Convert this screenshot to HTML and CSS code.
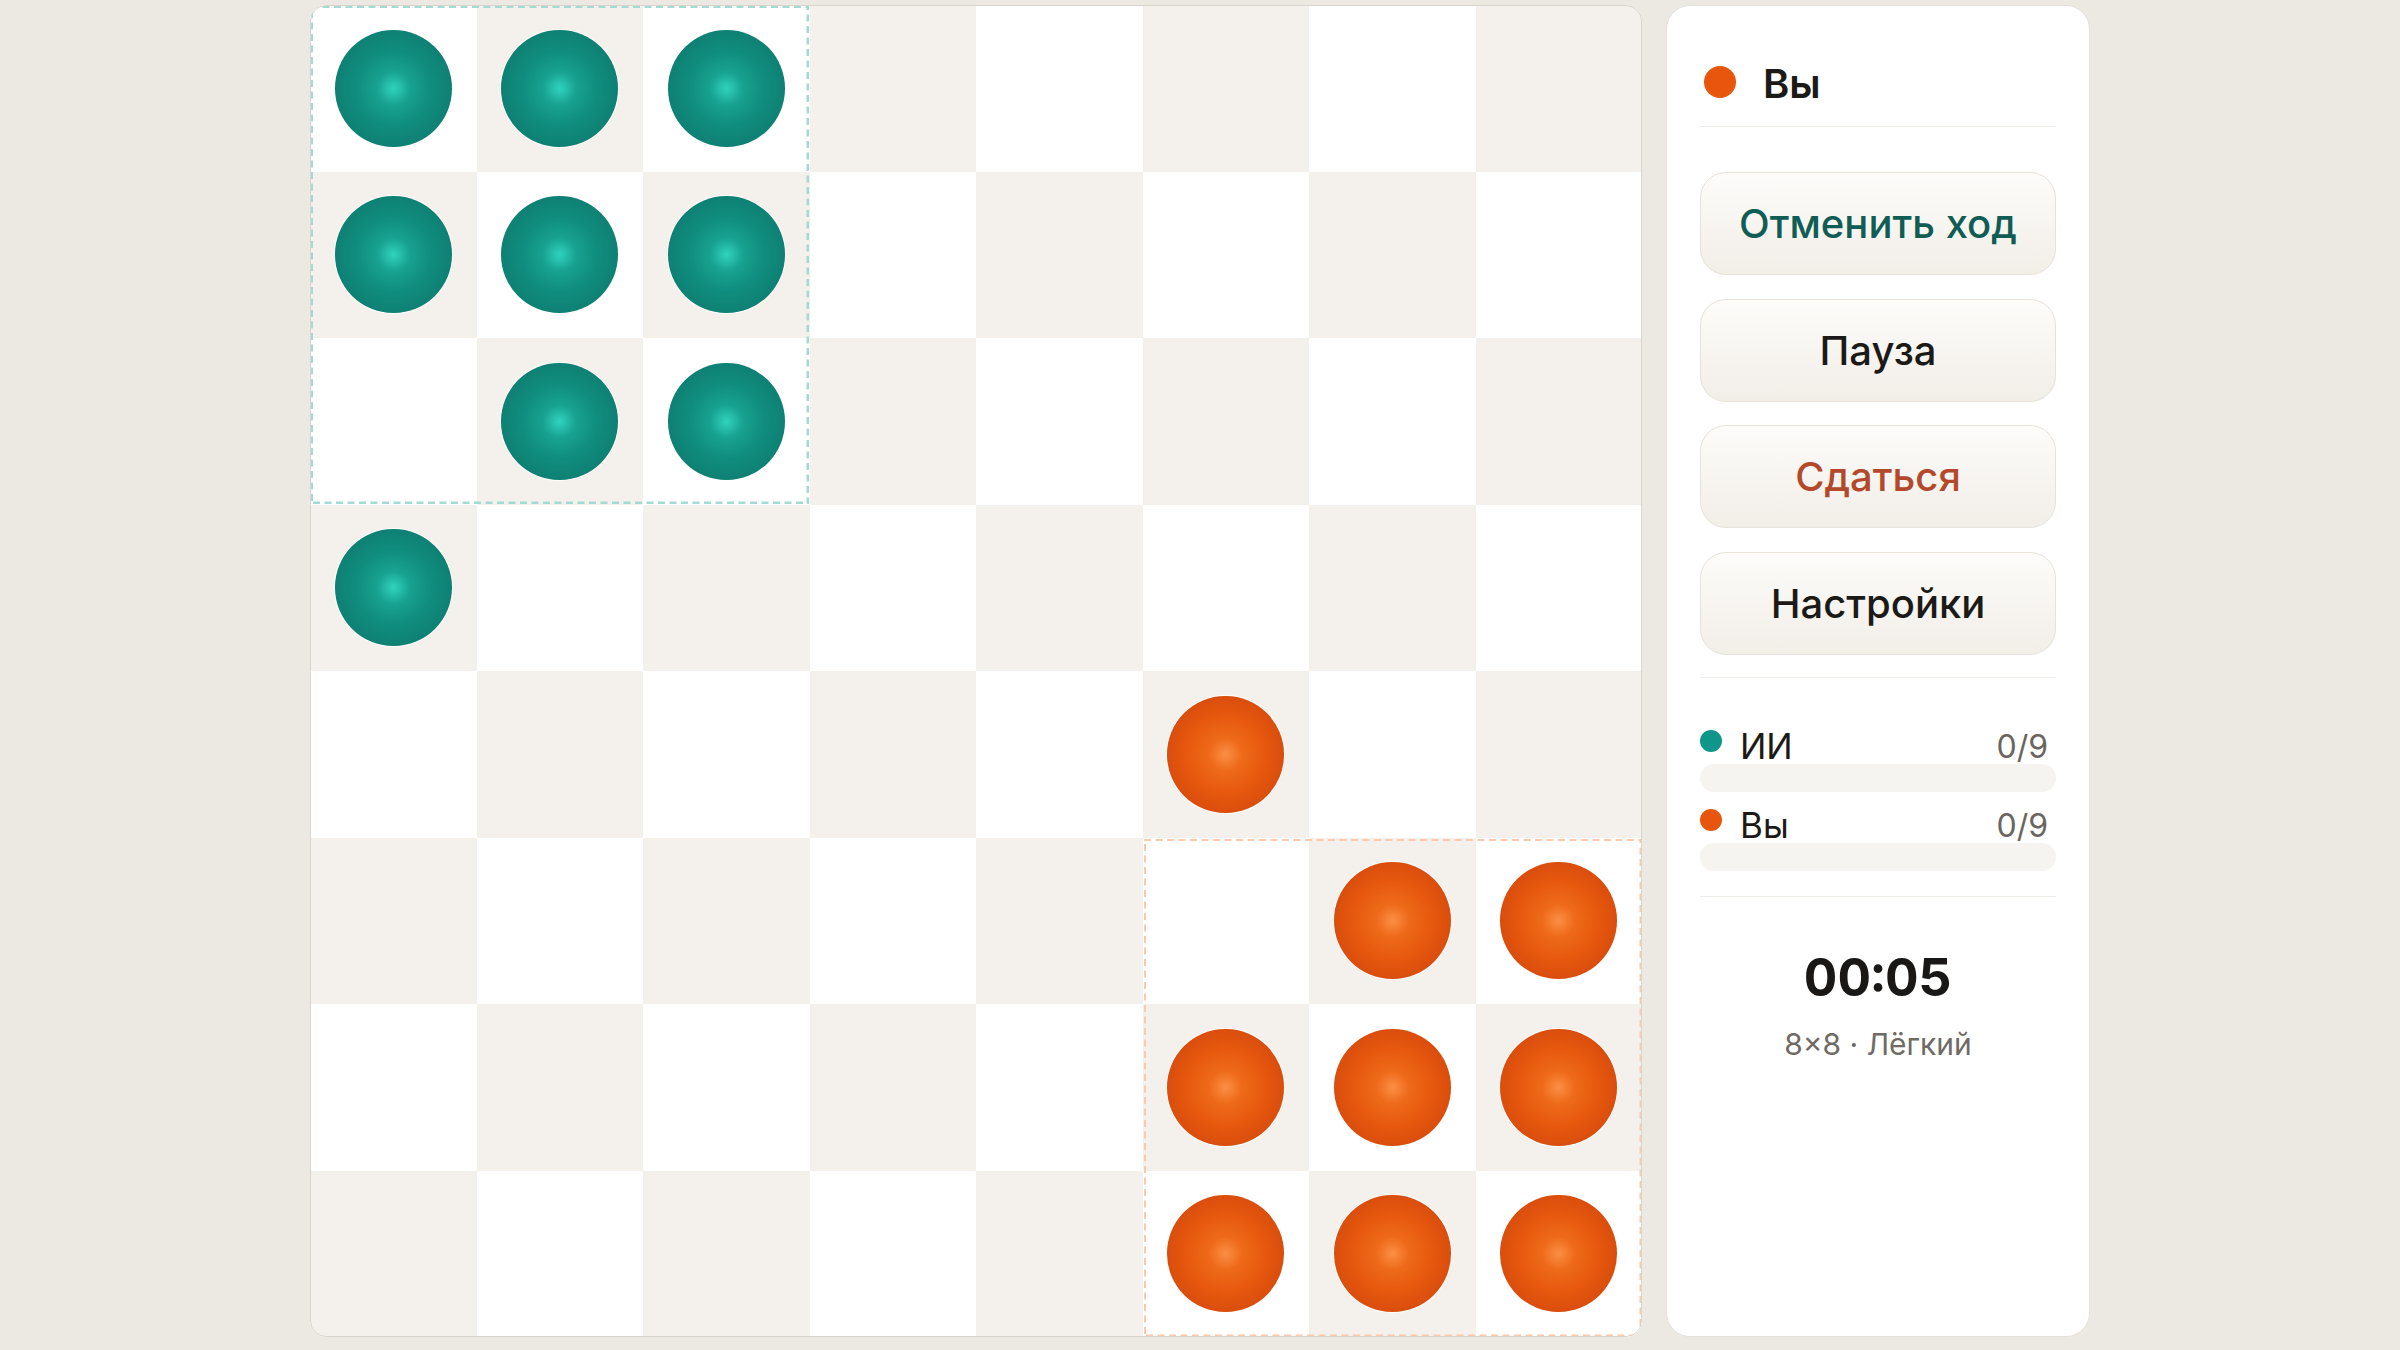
FILE: index.html
```html
<!DOCTYPE html>
<html lang="ru">

<head>
    <meta charset="UTF-8">
    <meta name="viewport" content="width=device-width, initial-scale=1.0">
    <title>Уголки</title>
    <link rel="stylesheet" href="styles.css">
</head>

<body>
    <div class="game">
        <div class="board" id="board">
            <div class="zone zone-ai">
                <svg class="zone-line"><rect width="100%" height="100%"></rect></svg>
            </div>
            <div class="zone zone-you">
                <svg class="zone-line"><rect width="100%" height="100%"></rect></svg>
            </div>
        </div>

        <aside class="panel">
            <div class="turn">
                <span class="dot dot-you"></span>
                <span class="turn-name">Вы</span>
            </div>

            <div class="controls">
                <button class="btn btn-undo">Отменить ход</button>
                <button class="btn">Пауза</button>
                <button class="btn btn-resign">Сдаться</button>
                <button class="btn">Настройки</button>
            </div>

            <div class="scores">
                <div class="score">
                    <div class="score-head">
                        <span class="dot dot-small dot-ai"></span>
                        <span class="score-name">ИИ</span>
                        <span class="score-count">0/9</span>
                    </div>
                    <div class="score-bar"><div class="score-fill score-fill-ai" style="width: 0%"></div></div>
                </div>
                <div class="score">
                    <div class="score-head">
                        <span class="dot dot-small dot-you"></span>
                        <span class="score-name">Вы</span>
                        <span class="score-count">0/9</span>
                    </div>
                    <div class="score-bar"><div class="score-fill score-fill-you" style="width: 0%"></div></div>
                </div>
            </div>

            <div class="clock">
                <div class="clock-time">00:05</div>
                <div class="clock-info">8×8 · Лёгкий</div>
            </div>
        </aside>
    </div>

    <script>
        // Starting position: AI in the top-left corner, player in the bottom-right
        const aiPieces = [[0, 0], [0, 1], [0, 2], [1, 0], [1, 1], [1, 2], [2, 1], [2, 2], [3, 0]];
        const youPieces = [[4, 5], [5, 6], [5, 7], [6, 5], [6, 6], [6, 7], [7, 5], [7, 6], [7, 7]];

        function hasPiece(list, row, col) {
            return list.some(p => p[0] === row && p[1] === col);
        }

        // Build the 8x8 board
        function drawBoard() {
            const board = document.getElementById('board');
            const firstZone = board.querySelector('.zone');

            for (let row = 0; row < 8; row++) {
                for (let col = 0; col < 8; col++) {
                    const cell = document.createElement('div');
                    cell.className = 'cell ' + ((row + col) % 2 === 0 ? 'cell-light' : 'cell-dark');

                    if (hasPiece(aiPieces, row, col)) {
                        cell.innerHTML = '<span class="piece piece-ai"></span>';
                    } else if (hasPiece(youPieces, row, col)) {
                        cell.innerHTML = '<span class="piece piece-you"></span>';
                    }
                    board.insertBefore(cell, firstZone);
                }
            }
        }

        drawBoard();
    </script>
</body>

</html>
```

FILE: styles.css
```css
body {
    margin: 0;
    background-color: #ece9e3;
    font-family: Inter, "Noto Sans", sans-serif;
    color: #1c1a17;
}

.game {
    display: flex;
    justify-content: center;
    gap: 24px;
    padding-top: 5px;
}

/* Board */

.board {
    position: relative;
    width: 1332px;
    height: 1332px;
    flex-shrink: 0;
    display: grid;
    grid-template-columns: repeat(8, 1fr);
    grid-template-rows: repeat(8, 1fr);
    border-radius: 16px;
    overflow: hidden;
}

.board::after {
    content: '';
    position: absolute;
    inset: 0;
    border: 1.5px solid #d9d4cc;
    border-radius: 16px;
    pointer-events: none;
}

.cell {
    display: flex;
    align-items: center;
    justify-content: center;
}

.cell-light {
    background-color: #ffffff;
}

.cell-dark {
    background-color: #f4f1ec;
}

.piece {
    width: 70%;
    height: 70%;
    border-radius: 50%;
    box-shadow: 0 0 0 1px rgba(255, 255, 255, 0.85);
}

.piece-ai {
    background: radial-gradient(circle at 50% 50%, #30d3bd 0%, #18a291 20%, #108d7e 45%, #0e8073 72%, #0b6b61 100%);
}

.piece-you {
    background: radial-gradient(circle at 50% 50%, #fb8f44 0%, #ee6a1a 20%, #e6580e 48%, #d84c0d 74%, #c2400b 100%);
}

.zone {
    position: absolute;
    width: calc(37.5% - 2px);
    height: calc(37.5% - 2px);
    pointer-events: none;
}

.zone-ai {
    top: 1px;
    left: 1px;
}

.zone-you {
    right: 1px;
    bottom: 1px;
}

.zone-line {
    display: block;
    width: 100%;
    height: 100%;
}

.zone-line rect {
    fill: none;
    stroke-width: 4;
    stroke-dasharray: 7 4.5;
}

.zone-ai rect {
    stroke: #a2dbd4;
}

.zone-you rect {
    stroke: #fcc9aa;
}

/* Side panel */

.panel {
    box-sizing: border-box;
    width: 424px;
    padding: 32px 33px;
    background-color: #ffffff;
    border: 1px solid #e6e2da;
    border-radius: 24px;
    display: flex;
    flex-direction: column;
}

.dot {
    display: inline-block;
    width: 32px;
    height: 32px;
    border-radius: 50%;
    flex-shrink: 0;
}

.dot-you {
    background-color: #e8560d;
}

.dot-ai {
    background-color: #0f968a;
}

.turn {
    display: flex;
    align-items: center;
    gap: 27px;
    padding: 22px 0 18px;
    border-bottom: 1px solid #f1eee9;
    font-size: 40px;
    font-weight: 600;
    line-height: 48px;
}

.turn .dot {
    margin-left: 4px;
    margin-bottom: 4px;
}

.controls {
    display: flex;
    flex-direction: column;
    gap: 23.5px;
    margin-top: 45px;
}

.btn {
    height: 103px;
    border: 1px solid #e7e2da;
    border-radius: 26px;
    background: linear-gradient(#fdfcfa, #f2eee8);
    font-family: Inter, "Noto Sans", sans-serif;
    font-size: 40px;
    font-weight: 500;
    color: #1c1a17;
    cursor: pointer;
}

.btn:hover {
    background: linear-gradient(#fbf9f6, #ede8e1);
}

.btn-undo {
    color: #0f5d55;
}

.btn-resign {
    color: #b3482b;
}

.scores {
    margin-top: 22.5px;
    padding: 50.5px 0 25px;
    border-top: 1px solid #f1eee9;
}

.score + .score {
    margin-top: 16px;
}

.score-head {
    display: flex;
    align-items: center;
    padding-right: 8px;
    font-size: 35px;
    line-height: 35px;
}

.dot-small {
    width: 22px;
    height: 22px;
    margin-right: 18px;
    margin-bottom: 10px;
}

.score-name {
    flex: 1;
}

.score-count {
    font-size: 32px;
    color: #6b6560;
}

.score-bar {
    height: 28px;
    border-radius: 14px;
    background-color: #f6f4f1;
    overflow: hidden;
}

.score-fill {
    height: 100%;
}

.score-fill-ai {
    background-color: #0f968a;
}

.score-fill-you {
    background-color: #e8560d;
}

.clock {
    border-top: 1px solid #f1eee9;
    padding-top: 50px;
    text-align: center;
}

.clock-time {
    font-size: 52px;
    font-weight: 700;
    line-height: 62px;
    font-variant-numeric: tabular-nums;
    color: #1a1816;
}

.clock-info {
    margin-top: 17px;
    font-size: 30px;
    line-height: 36px;
    color: #6f6a64;
}
```
